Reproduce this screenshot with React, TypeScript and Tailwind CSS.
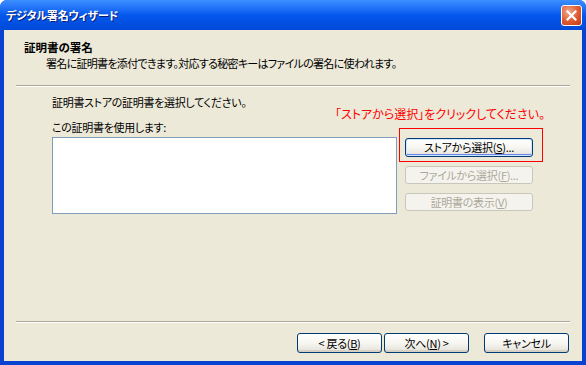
import React from "react";

const font =
  "font-['Noto_Sans_CJK_JP','Noto_Sans',sans-serif] [font-feature-settings:'palt']";

interface XpButtonProps {
  children: React.ReactNode;
  disabled?: boolean;
  focused?: boolean;
  className?: string;
}

const XpButton = ({ children, disabled, focused, className }: XpButtonProps) => {
  if (disabled) {
    return (
      <div
        className={`flex items-center justify-center rounded-[3px] border border-[#C9C7BA] bg-[#F4F3EE] text-[11px] leading-none text-[#ACA899] ${className}`}
      >
        {children}
      </div>
    );
  }
  return (
    <div
      className={`flex items-center justify-center rounded-[3px] border border-[#003C74] bg-gradient-to-b from-[#FFFFFF] via-[#F7F6F1] to-[#E3E1D8] text-[11px] leading-none text-black ${
        focused ? "shadow-[inset_0_0_0_1px_#CEE7FF,inset_0_-1px_0_1px_#6982EE]" : "shadow-[inset_0_-2px_0_#D6D0C5]"
      } ${className}`}
    >
      {children}
    </div>
  );
};

const CloseIcon = () => (
  <div className="flex h-[21px] w-[21px] items-center justify-center rounded-[3px] border border-white bg-[radial-gradient(circle_at_35%_30%,#F1A88F,#E0582E_55%,#C13A15)]">
    <svg width="11" height="11" viewBox="0 0 11 11">
      <path d="M1.5 1.5 L9.5 9.5 M9.5 1.5 L1.5 9.5" stroke="white" strokeWidth="2.2" strokeLinecap="square" />
    </svg>
  </div>
);

const Separator = ({ className }: { className?: string }) => (
  <div className={`h-[2px] border-t border-[#ACA899] border-b border-b-white ${className}`} />
);

export default function App() {
  return (
    <div className={`flex h-[365px] w-[586px] flex-col overflow-hidden rounded-t-[7px] bg-[#0842D0] ${font}`}>
      {/* title bar */}
      <div className="flex h-[30px] shrink-0 items-center justify-between bg-gradient-to-b from-[#3D8EFF] via-[#0558EE] to-[#0049D8] pl-[6px] pr-[4px]">
        <span className="text-[11px] font-bold tracking-[-0.2px] text-white [text-shadow:1px_1px_0_#0A1B6E]">
          デジタル署名ウィザード
        </span>
        <CloseIcon />
      </div>

      {/* body */}
      <div className="relative mx-[4px] mb-[4px] flex flex-1 flex-col bg-[#ECE9D8] text-[11px] leading-[14px] tracking-[-0.3px] text-black">
        <div className="pl-[20px] pt-[10px]">
          <div className="text-[11.5px] font-bold tracking-normal">証明書の署名</div>
          <div className="mt-[2px] pl-[22px] tracking-[-0.7px]">
            署名に証明書を添付できます。対応する秘密キーはファイルの署名に使われます。
          </div>
        </div>
        <Separator className="mx-[12px] mt-[15px]" />

        <div className="pl-[48px] pt-[8px]">
          <div>証明書ストアの証明書を選択してください。</div>
          <div className="mt-[11px]">この証明書を使用します:</div>
          <div className="mt-[3px] flex gap-[8px]">
            <div className="h-[77px] w-[345px] border border-[#7F9DB9] bg-white" />
            <div className="mt-[1px] flex flex-col gap-[9px]">
              <XpButton focused className="h-[19px] w-[128px]">
                ストアから選択(<u>S</u>)...
              </XpButton>
              <XpButton disabled className="h-[18px] w-[128px]">
                ファイルから選択(<u>F</u>)...
              </XpButton>
              <XpButton disabled className="h-[18px] w-[128px]">
                証明書の表示(<u>V</u>)
              </XpButton>
            </div>
          </div>
        </div>

        <div className="flex-1" />
        <Separator className="mx-[12px]" />
        <div className="flex justify-end pb-[8px] pr-[13px] pt-[10px]">
          <XpButton className="h-[20px] w-[85px]">
            &lt; 戻る(<u>B</u>)
          </XpButton>
          <XpButton className="ml-[2px] h-[20px] w-[85px]">
            次へ(<u>N</u>) &gt;
          </XpButton>
          <XpButton className="ml-[15px] h-[20px] w-[85px]">キャンセル</XpButton>
        </div>

        {/* annotation overlay */}
        <div className="absolute left-[331px] top-[77px] text-[12px] tracking-normal text-[#FF0000]">
          「ストアから選択」をクリックしてください。
        </div>
        <div className="absolute left-[395px] top-[98px] h-[34px] w-[144px] border border-[#FF0000]" />
      </div>
    </div>
  );
}
